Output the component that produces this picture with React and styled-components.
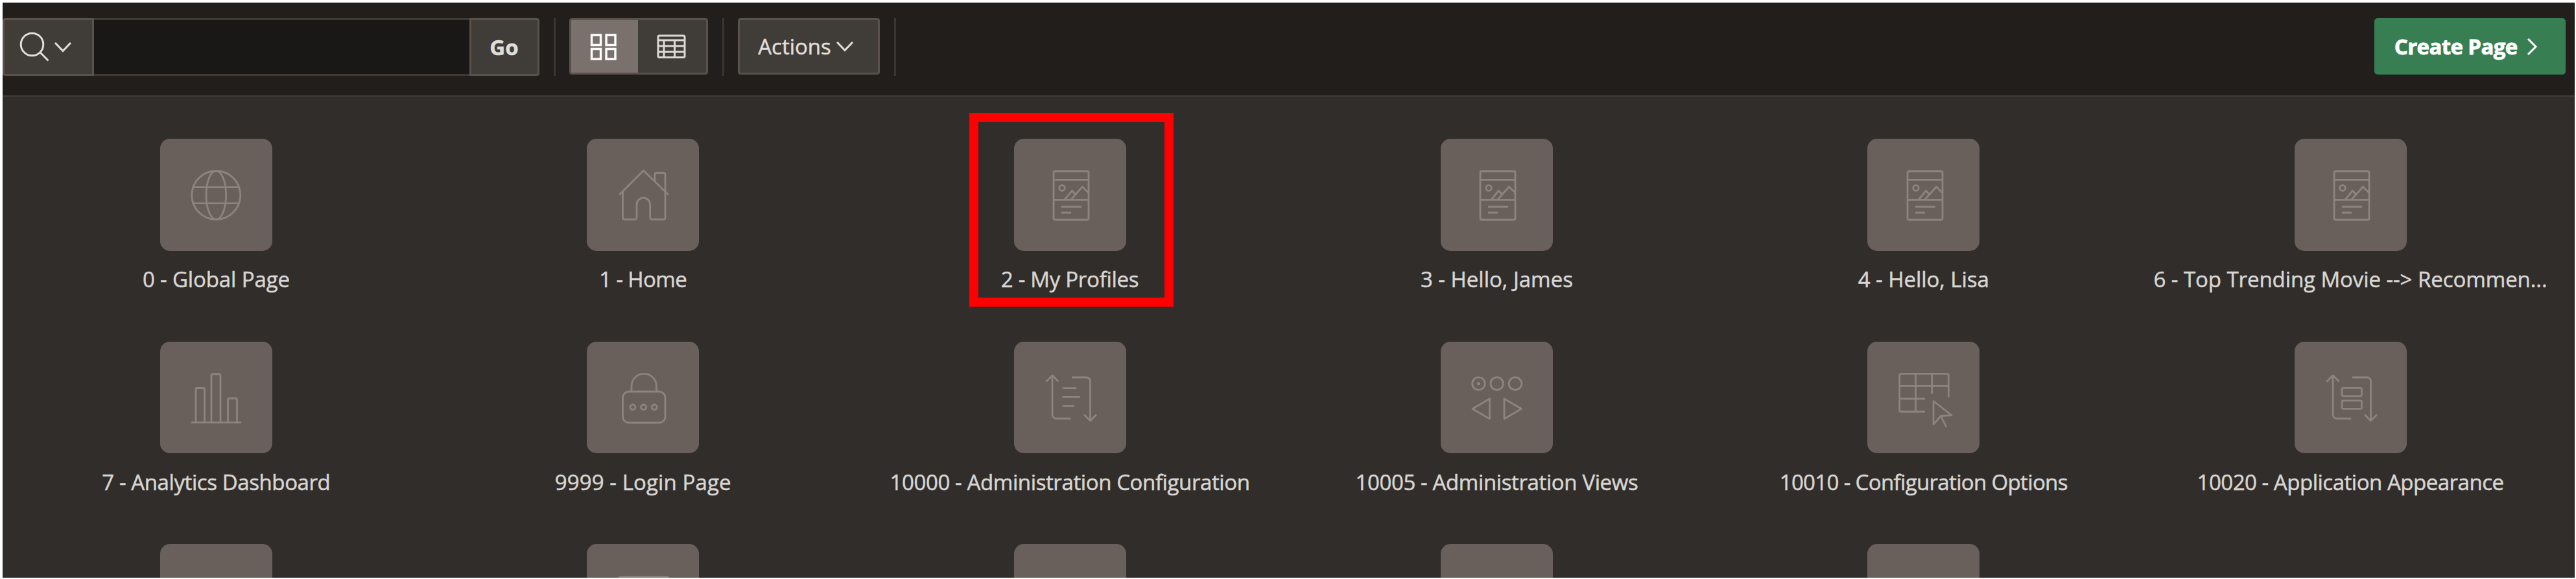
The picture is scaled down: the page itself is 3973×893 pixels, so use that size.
import React from 'react';
import styled, { createGlobalStyle } from 'styled-components';

const GlobalStyle = createGlobalStyle`
  *, *::before, *::after { box-sizing: border-box; }
  body { margin: 0; background: #fff; font-family: 'Open Sans', 'Liberation Sans', sans-serif; }
  button, input { font: inherit; color: inherit; margin: 0; padding: 0; }
`;

const Panel = styled.main`
  margin: 4px 2px 0 4px;
  height: 886.7px;
  overflow: hidden;
  background: #312d2a;
  color: #d8d6d3;
  font-size: 33px;
  font-weight: 500;
  -webkit-text-stroke: 0.5px currentColor;
`;

const Toolbar = styled.header`
  display: flex;
  align-items: flex-start;
  height: 145.5px;
  padding: 24px 14.5px 0 0;
  background: #221e1b;
  border-bottom: 3px solid #3d3936;
`;

const SearchGroup = styled.div`
  display: flex;
  width: 828px;
  height: 89px;
`;

const Button = styled.button`
  display: flex;
  align-items: center;
  justify-content: center;
  width: ${(p) => p.$width}px;
  height: ${(p) => p.$height || 87}px;
  padding-right: ${(p) => p.$inset || 0}px;
  border: 3px solid #5a514b;
  border-radius: ${(p) => p.$radius || '4px'};
  background: #403c37;
  font-weight: ${(p) => (p.$bold ? 700 : 500)};
  letter-spacing: ${(p) => p.$spacing || 0}px;
  color: #e0deda;
`;

const SearchInput = styled.input`
  flex: 1;
  min-width: 0;
  border: solid #3d3935;
  border-width: 3px 0;
  background: #1a1816;
`;

const Divider = styled.span`
  width: 3px;
  height: 89px;
  margin: 0 21.5px;
  background: #3a3632;
`;

const ViewToggle = styled.div`
  display: flex;
  width: 214px;
  height: 87px;
  border: 3px solid #5a514b;
  border-radius: 4px;
  overflow: hidden;
  background: #403c37;
`;

const ToggleItem = styled.button`
  display: flex;
  align-items: center;
  justify-content: center;
  flex: 1;
  margin: ${(p) => (p.$active ? '-3px 0 -3px -3px' : '0')};
  border: 0;
  background: ${(p) => (p.$active ? '#7a716d' : 'transparent')};
  color: ${(p) => (p.$active ? '#fff' : '#dcdad7')};
`;

const CreateButton = styled(Button)`
  margin-left: auto;
  border: 0;
  border-radius: 5px;
  background: #377f53;
  color: #fff;
  -webkit-text-stroke: 0.8px currentColor;
`;

const PageGrid = styled.section`
  display: grid;
  grid-template-columns: repeat(6, 658.35px);
  grid-auto-rows: 312.6px;
  padding: 64.5px 0 0 0.2px;
`;

const PageCard = styled.article`
  position: relative;
  display: flex;
  flex-direction: column;
  align-items: center;
`;

const Tile = styled.div`
  display: grid;
  place-items: center;
  width: 173px;
  height: 172.7px;
  border-radius: 15px;
  background: #69605b;
`;

const TileIcon = styled.svg`
  width: 96px;
  height: 96px;
  fill: none;
  stroke: #8b847f;
  stroke-width: 2.8;
  stroke-linejoin: round;
`;

const Label = styled.div`
  margin-top: 21.5px;
  line-height: 46px;
  white-space: nowrap;
  letter-spacing: ${(p) => p.$spacing}px;
`;

const Highlight = styled.div`
  position: absolute;
  top: -40px;
  left: calc(50% - 155.3px);
  width: 315px;
  height: 299px;
  border: 14px solid #f00;
`;

const LineIcon = styled.svg`
  flex: none;
  fill: none;
  stroke: currentColor;
  stroke-width: ${(p) => p.$stroke || 3};
  margin-left: ${(p) => p.$gap || 0}px;
`;

const scrollArrows = (
  <>
    <path d="M49.3 80.6H27a6 6 0 0 1-6-6V14M11.5 23.5 21 14l9.5 9.5" />
    <path d="M51 17h22.5a6 6 0 0 1 6 6v61M70 74.5l9.5 9.5 9.5-9.5" />
  </>
);

const icons = {
  globe: (
    <>
      <circle cx="48.3" cy="49" r="37.5" />
      <ellipse cx="48.3" cy="49" rx="15.3" ry="37.5" />
      <path d="M13 36.6h70.6M13 61.6h70.6" />
    </>
  ),
  home: (
    <>
      <path d="M11 48.5 48.5 11 87 48.5" />
      <path d="M16.5 43.5V84a2.5 2.5 0 0 0 2.5 2.5h16.5A2.5 2.5 0 0 0 38 84V63.5a10.3 10.3 0 0 1 20.7 0V84a2.5 2.5 0 0 0 2.5 2.5h18.3A2.5 2.5 0 0 0 82 84V17a2.5 2.5 0 0 0-2.5-2.5h-11A2.5 2.5 0 0 0 66 17v11" />
    </>
  ),
  page: (
    <>
      <rect x="23" y="12" width="54" height="75" rx="2.5" />
      <path d="M23 25.3h54M23 56.3h54" />
      <circle cx="36" cy="38" r="4.3" />
      <path d="m40 56 11.5-14 4.5 5.5M49.5 56 67.5 36 77 45.5" />
      <path d="M35 67h31M35 76h15" />
    </>
  ),
  chart: (
    <path d="M10 86.6h77M17 86.6V35.5a2 2 0 0 1 2-2h9.5a2 2 0 0 1 2 2v51M41 86.6V14a2 2 0 0 1 2-2h10a2 2 0 0 1 2 2v72.6M66.5 86.6V51.5a2 2 0 0 1 2-2h10a2 2 0 0 1 2 2v35" />
  ),
  lock: (
    <>
      <rect x="16.5" y="39" width="65.5" height="48" rx="9" />
      <path d="M30 39v-8.5a19.2 19.2 0 0 1 38.4 0V39" />
      <circle cx="32" cy="63" r="4" />
      <circle cx="48.6" cy="63" r="4" />
      <circle cx="65.2" cy="63" r="4" />
    </>
  ),
  scrollText: (
    <>
      {scrollArrows}
      <path d="M36.6 33.6H58M36.6 47.3h27M36.6 61.3H55" />
    </>
  ),
  carousel: (
    <>
      <circle cx="20.5" cy="26.6" r="9.8" />
      <circle cx="48.7" cy="26.6" r="9.8" />
      <circle cx="77" cy="26.6" r="9.8" />
      <circle cx="20.5" cy="26.6" r="1.3" />
      <path d="M11 65.5 37.5 50v31zM86.5 65.5 60 50v31z" />
    </>
  ),
  gridCursor: (
    <>
      <path d="M50 70H13.2a2.5 2.5 0 0 1-2.5-2.5V13.8a2.5 2.5 0 0 1 2.5-2.5h70.6a2.5 2.5 0 0 1 2.5 2.5V48M10.7 30.3h75.6M10.7 50H50M35.5 11.3V70M60.7 11.3V42.5" />
      <path d="M63 53.5V89.5L74.5 76.5 91 75.5zM74.5 76.5l8.3 17" />
    </>
  ),
  scrollBlocks: (
    <>
      {scrollArrows}
      <rect x="35" y="33.3" width="30.5" height="12.5" rx="2" />
      <rect x="35" y="52.8" width="30.5" height="12.5" rx="2" />
    </>
  ),
  frame: <rect x="11" y="12" width="76" height="70" rx="2.5" />,
};

const pages = [
  { name: '0 - Global Page', icon: 'globe', spacing: -0.13 },
  { name: '1 - Home', icon: 'home', spacing: -0.6 },
  { name: '2 - My Profiles', icon: 'page', spacing: -0.28, highlighted: true },
  { name: '3 - Hello, James', icon: 'page', spacing: -0.01 },
  { name: '4 - Hello, Lisa', icon: 'page', spacing: -0.05 },
  { name: '6 - Top Trending Movie --> Recommen...', icon: 'page', spacing: -0.07 },
  { name: '7 - Analytics Dashboard', icon: 'chart', spacing: -0.41 },
  { name: '9999 - Login Page', icon: 'lock', spacing: 0.12 },
  { name: '10000 - Administration Configuration', icon: 'scrollText', spacing: -0.39 },
  { name: '10005 - Administration Views', icon: 'carousel', spacing: -0.38 },
  { name: '10010 - Configuration Options', icon: 'gridCursor', spacing: -0.65 },
  { name: '10020 - Application Appearance', icon: 'scrollBlocks', spacing: -0.48 },
];

const nextPages = [null, 'frame', null, null, null];

const ChevronDown = () => (
  <LineIcon $gap={7} width="28" height="20" viewBox="0 0 28 20">
    <path d="m2 3 12 12.5L26 3" />
  </LineIcon>
);

export default function App() {
  return (
    <>
      <GlobalStyle />
      <Panel>
        <Toolbar>
          <SearchGroup>
            <Button $width={141} $height={89} $inset={10} $radius="4px 0 0 4px" aria-label="Search options">
              <LineIcon width="48" height="50" viewBox="0 1 48 50">
                <circle cx="21.5" cy="21.5" r="17.3" />
                <path d="m33.5 33.5 13 13" />
              </LineIcon>
              <ChevronDown />
            </Button>
            <SearchInput aria-label="Search" />
            <Button $width={108} $height={89} $inset={1} $radius="0 4px 4px 0" $bold>Go</Button>
          </SearchGroup>
          <Divider />
          <ViewToggle>
            <ToggleItem $active aria-label="Icon view">
              <LineIcon width="42" height="42" viewBox="0 0 42 42" $stroke={3.4}>
                <path d="M2.5 3h14v15.5h-14zM25 3h14v15.5H25zM2.5 24.5h14V40h-14zM25 24.5h14V40H25z" />
              </LineIcon>
            </ToggleItem>
            <ToggleItem aria-label="Report view">
              <LineIcon width="46" height="38" viewBox="0 0 46 38">
                <rect x="2" y="2" width="41" height="33.5" rx="2" />
                <path d="M2 9h41M2 18h41M2 27h41M11 9v26M27.5 9v26" />
              </LineIcon>
            </ToggleItem>
          </ViewToggle>
          <Divider />
          <Button $width={219} $inset={9}>
            Actions
            <ChevronDown />
          </Button>
          <Divider />
          <CreateButton $width={294.5} $inset={12} $spacing={-0.6} $bold>
            Create Page
            <LineIcon $gap={13} width="18" height="30" viewBox="0 0 18 30">
              <path d="m3 3 12 12L3 27" />
            </LineIcon>
          </CreateButton>
        </Toolbar>
        <PageGrid>
          {pages.map((page) => (
            <PageCard key={page.name}>
              <Tile>
                <TileIcon viewBox="0 0 96 96">{icons[page.icon]}</TileIcon>
              </Tile>
              <Label $spacing={page.spacing}>{page.name}</Label>
              {page.highlighted && <Highlight />}
            </PageCard>
          ))}
          {nextPages.map((icon, i) => (
            <PageCard key={i}>
              <Tile>{icon && <TileIcon viewBox="0 0 96 96">{icons[icon]}</TileIcon>}</Tile>
            </PageCard>
          ))}
        </PageGrid>
      </Panel>
    </>
  );
}
